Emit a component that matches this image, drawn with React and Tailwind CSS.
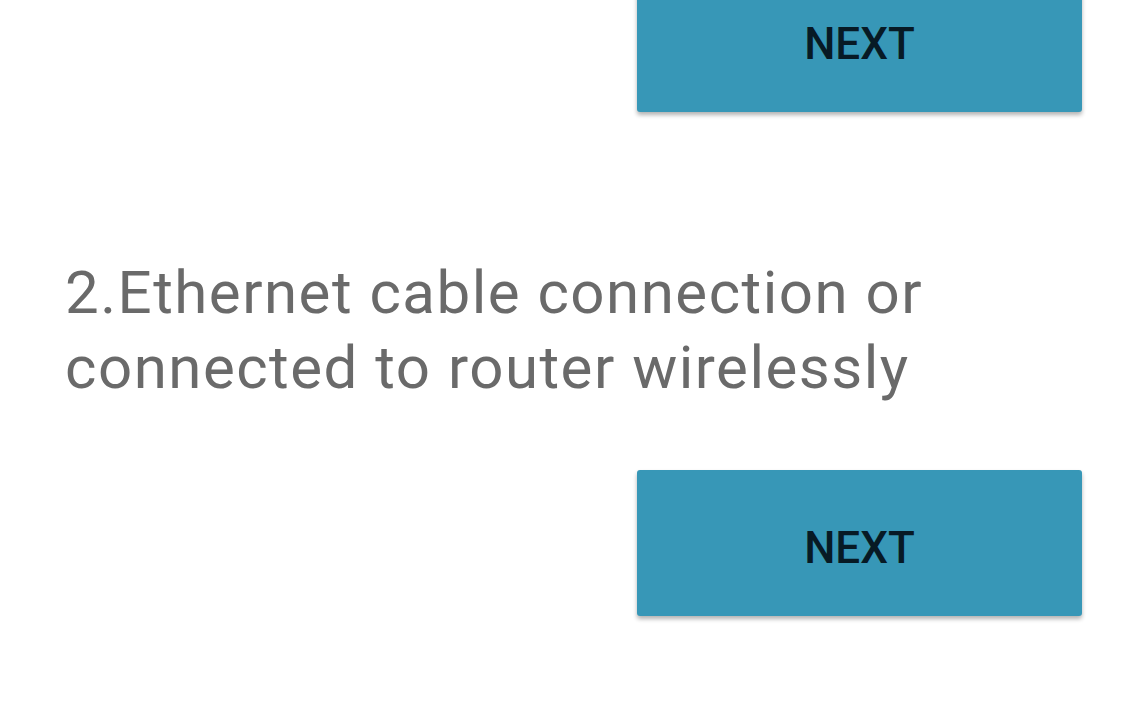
export default function App() {
  return (
    <main className="flex h-[716px] w-full flex-col overflow-hidden bg-white px-[64px] font-['Roboto',sans-serif]">
      <div className="-mt-[34px] flex justify-end">
        <button
          type="button"
          className="flex h-[146px] w-[445px] items-center justify-center rounded-[3px] bg-[#3797b7] pt-[10px] text-[44px] font-medium text-[#071a25] shadow-[0_3px_4px_rgba(0,0,0,0.3)]"
        >
          NEXT
        </button>
      </div>

      <p className="mt-[143px] pl-px text-[60px] leading-[75px] tracking-[1.5px] text-[#6a6a6a]">
        2.Ethernet cable connection or
        <br />
        connected to router wirelessly
      </p>

      <div className="mt-[65px] flex justify-end">
        <button
          type="button"
          className="flex h-[146px] w-[445px] items-center justify-center rounded-[3px] bg-[#3797b7] pt-[10px] text-[44px] font-medium text-[#071a25] shadow-[0_3px_4px_rgba(0,0,0,0.3)]"
        >
          NEXT
        </button>
      </div>
    </main>
  );
}
